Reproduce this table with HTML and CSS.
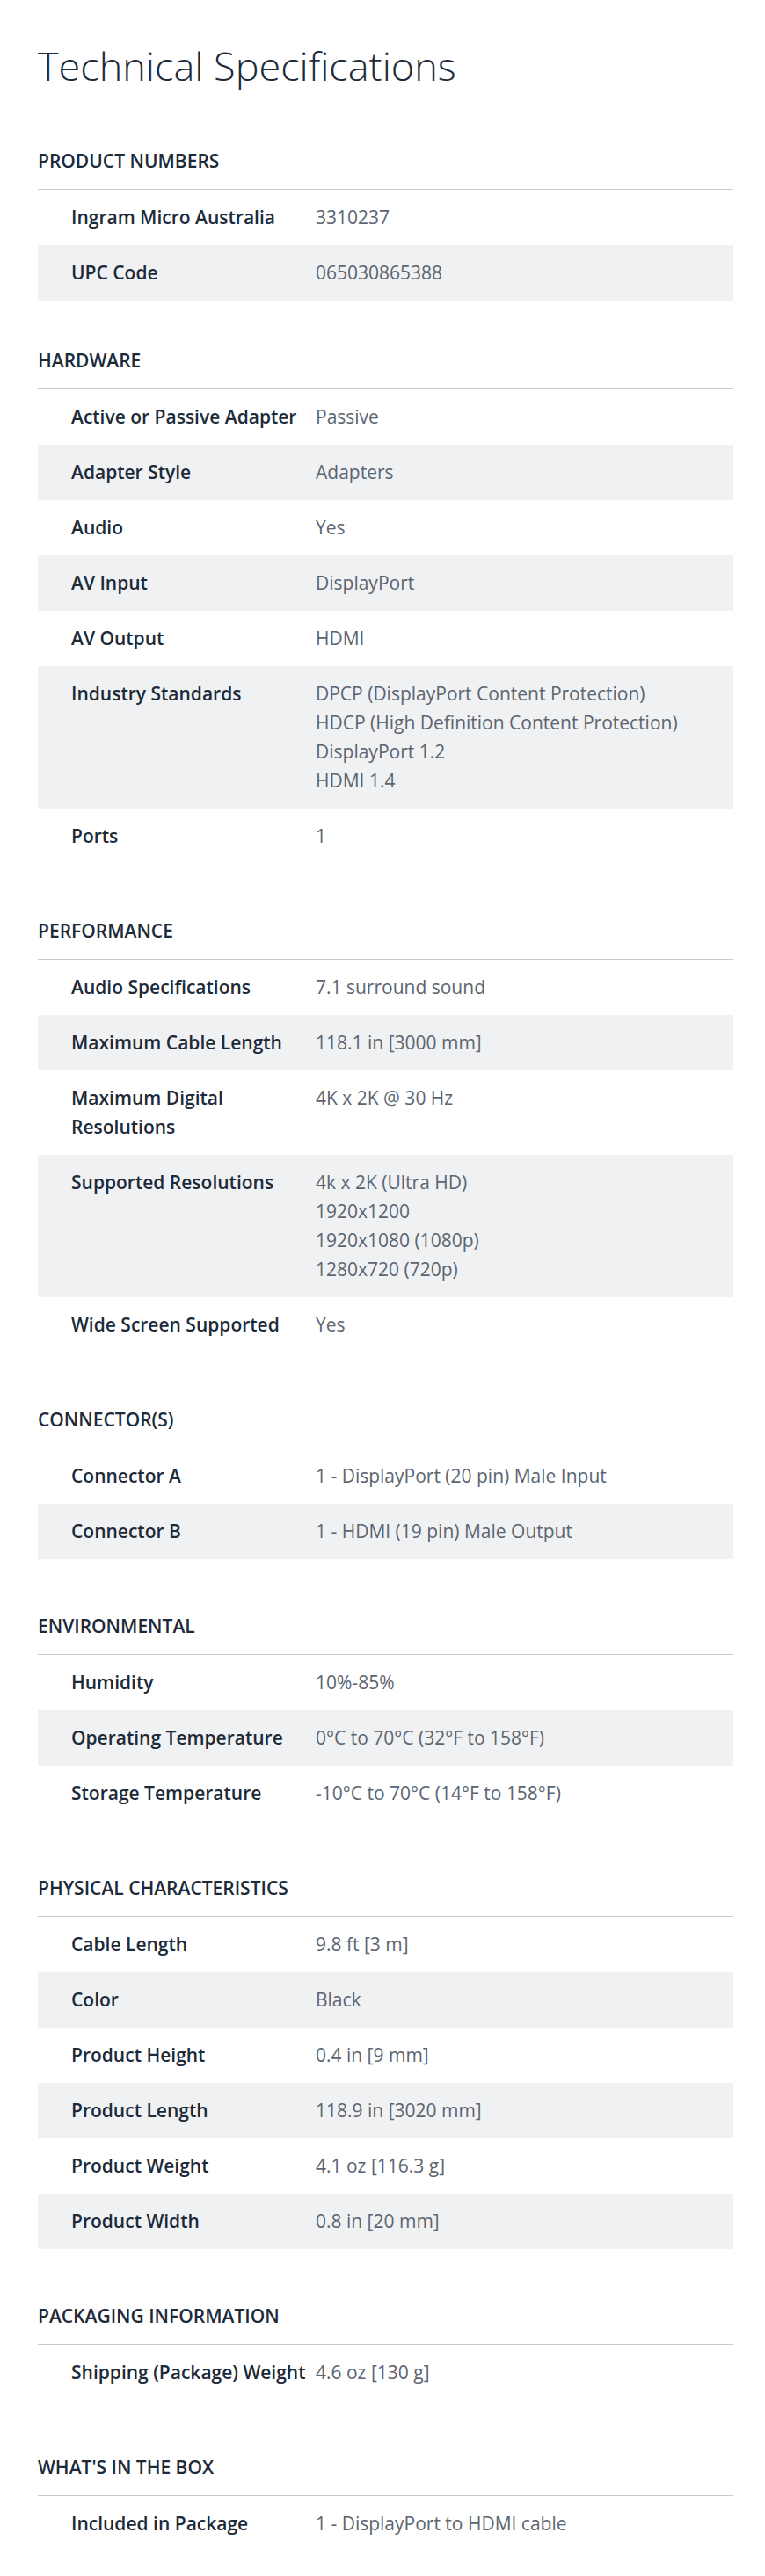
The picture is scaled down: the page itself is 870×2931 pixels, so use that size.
FILE: index.html
```html
<!DOCTYPE html>
<html lang="en">
<head>
<meta charset="utf-8">
<title>Technical Specifications</title>
<link rel="stylesheet" href="styles.css">
</head>
<body>
<main class="page">
  <h1 class="title">Technical Specifications</h1>

  <section class="spec-group first">
    <h2 class="group-title">PRODUCT NUMBERS</h2>
    <div class="spec-list">
      <div class="spec-row"><div class="spec-label">Ingram Micro Australia</div><div class="spec-value">3310237</div></div>
      <div class="spec-row"><div class="spec-label">UPC Code</div><div class="spec-value">065030865388</div></div>
    </div>
  </section>

  <section class="spec-group">
    <h2 class="group-title">HARDWARE</h2>
    <div class="spec-list">
      <div class="spec-row"><div class="spec-label">Active or Passive Adapter</div><div class="spec-value">Passive</div></div>
      <div class="spec-row"><div class="spec-label">Adapter Style</div><div class="spec-value">Adapters</div></div>
      <div class="spec-row"><div class="spec-label">Audio</div><div class="spec-value">Yes</div></div>
      <div class="spec-row"><div class="spec-label">AV Input</div><div class="spec-value">DisplayPort</div></div>
      <div class="spec-row"><div class="spec-label">AV Output</div><div class="spec-value">HDMI</div></div>
      <div class="spec-row"><div class="spec-label">Industry Standards</div><div class="spec-value">DPCP (DisplayPort Content Protection)<br>HDCP (High Definition Content Protection)<br>DisplayPort 1.2<br>HDMI 1.4</div></div>
      <div class="spec-row"><div class="spec-label">Ports</div><div class="spec-value">1</div></div>
    </div>
  </section>

  <section class="spec-group">
    <h2 class="group-title">PERFORMANCE</h2>
    <div class="spec-list">
      <div class="spec-row"><div class="spec-label">Audio Specifications</div><div class="spec-value">7.1 surround sound</div></div>
      <div class="spec-row"><div class="spec-label">Maximum Cable Length</div><div class="spec-value">118.1 in [3000 mm]</div></div>
      <div class="spec-row"><div class="spec-label">Maximum Digital Resolutions</div><div class="spec-value">4K x 2K @ 30 Hz</div></div>
      <div class="spec-row"><div class="spec-label">Supported Resolutions</div><div class="spec-value">4k x 2K (Ultra HD)<br>1920x1200<br>1920x1080 (1080p)<br>1280x720 (720p)</div></div>
      <div class="spec-row"><div class="spec-label">Wide Screen Supported</div><div class="spec-value">Yes</div></div>
    </div>
  </section>

  <section class="spec-group">
    <h2 class="group-title">CONNECTOR(S)</h2>
    <div class="spec-list">
      <div class="spec-row"><div class="spec-label">Connector A</div><div class="spec-value">1 - DisplayPort (20 pin) Male Input</div></div>
      <div class="spec-row"><div class="spec-label">Connector B</div><div class="spec-value">1 - HDMI (19 pin) Male Output</div></div>
    </div>
  </section>

  <section class="spec-group">
    <h2 class="group-title">ENVIRONMENTAL</h2>
    <div class="spec-list">
      <div class="spec-row"><div class="spec-label">Humidity</div><div class="spec-value">10%-85%</div></div>
      <div class="spec-row"><div class="spec-label">Operating Temperature</div><div class="spec-value">0°C to 70°C (32°F to 158°F)</div></div>
      <div class="spec-row"><div class="spec-label">Storage Temperature</div><div class="spec-value">-10°C to 70°C (14°F to 158°F)</div></div>
    </div>
  </section>

  <section class="spec-group">
    <h2 class="group-title">PHYSICAL CHARACTERISTICS</h2>
    <div class="spec-list">
      <div class="spec-row"><div class="spec-label">Cable Length</div><div class="spec-value">9.8 ft [3 m]</div></div>
      <div class="spec-row"><div class="spec-label">Color</div><div class="spec-value">Black</div></div>
      <div class="spec-row"><div class="spec-label">Product Height</div><div class="spec-value">0.4 in [9 mm]</div></div>
      <div class="spec-row"><div class="spec-label">Product Length</div><div class="spec-value">118.9 in [3020 mm]</div></div>
      <div class="spec-row"><div class="spec-label">Product Weight</div><div class="spec-value">4.1 oz [116.3 g]</div></div>
      <div class="spec-row"><div class="spec-label">Product Width</div><div class="spec-value">0.8 in [20 mm]</div></div>
    </div>
  </section>

  <section class="spec-group">
    <h2 class="group-title">PACKAGING INFORMATION</h2>
    <div class="spec-list">
      <div class="spec-row"><div class="spec-label">Shipping (Package) Weight</div><div class="spec-value">4.6 oz [130 g]</div></div>
    </div>
  </section>

  <section class="spec-group">
    <h2 class="group-title">WHAT'S IN THE BOX</h2>
    <div class="spec-list">
      <div class="spec-row"><div class="spec-label">Included in Package</div><div class="spec-value">1 - DisplayPort to HDMI cable</div></div>
    </div>
  </section>
</main>
</body>
</html>
```

FILE: styles.css
```css
html, body {
  margin: 0;
  padding: 0;
  background: #ffffff;
}

body {
  font-family: "Open Sans", "Noto Sans", sans-serif;
  color: #1c2a39;
}

.page {
  padding: 47px 36px 28px 43px;
}

.title {
  margin: 0 0 65px;
  font-size: 45px;
  line-height: 55px;
  font-weight: 300;
  color: #1c2a39;
}

.spec-group {
  margin-bottom: 60px;
}

.spec-group.first {
  margin-bottom: 52px;
}

.spec-group:last-child {
  margin-bottom: 0;
}

.group-title {
  margin: 0;
  padding-bottom: 15px;
  border-bottom: 1px solid #cbcbcb;
  font-size: 21px;
  line-height: 33px;
  font-weight: 600;
  color: #1c2a39;
}

.spec-row {
  display: grid;
  grid-template-columns: 278px 1fr;
  padding: 15px 0 15px 38px;
  font-size: 21px;
  line-height: 33px;
}

.spec-row:nth-child(even) {
  background: #f0f1f3;
}

.spec-label {
  font-weight: 600;
  color: #1c2a39;
  padding-right: 0;
}

.spec-value {
  font-weight: 400;
  color: #5b6571;
}
```
